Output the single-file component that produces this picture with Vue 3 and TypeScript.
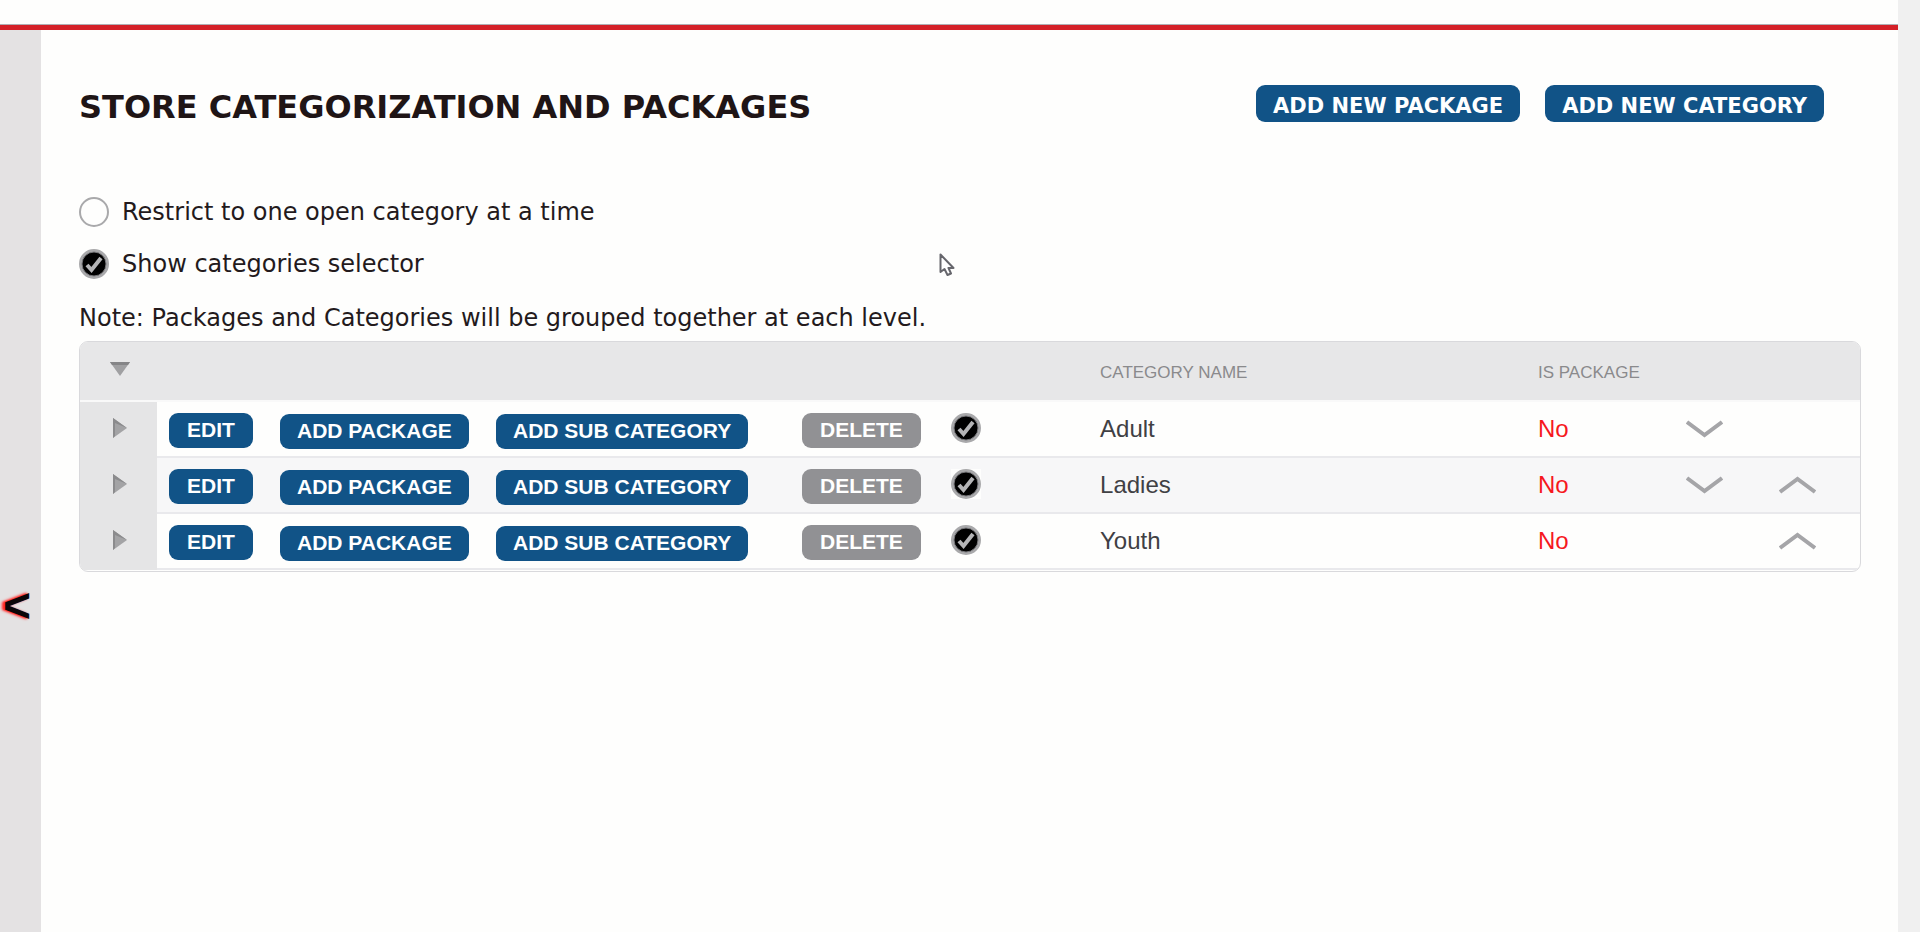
<script setup lang="ts">
import { ref } from 'vue'

interface Category {
  name: string
  isPackage: boolean
  selected: boolean
}

const restrictToOne = ref(false)
const showSelector = ref(true)

const categories = ref<Category[]>([
  { name: 'Adult', isPackage: false, selected: true },
  { name: 'Ladies', isPackage: false, selected: true },
  { name: 'Youth', isPackage: false, selected: true }
])

function move(index: number, step: number): void {
  const [item] = categories.value.splice(index, 1)
  categories.value.splice(index + step, 0, item)
}
</script>

<template>
  <div class="page">
    <div class="shell">
      <header class="topbar"></header>
      <div class="body">
        <aside class="sidebar">
          <button class="collapse" type="button" aria-label="Collapse menu">&lt;</button>
        </aside>
        <main class="content">
          <div class="heading">
            <h1>STORE CATEGORIZATION AND PACKAGES</h1>
            <div class="heading-actions">
              <button class="btn btn-top" type="button">ADD NEW PACKAGE</button>
              <button class="btn btn-top" type="button">ADD NEW CATEGORY</button>
            </div>
          </div>

          <div class="options">
            <label class="option">
              <span class="check">
                <input v-model="restrictToOne" type="checkbox" />
                <svg viewBox="0 0 30 30"><circle cx="15" cy="15" r="12" /><path d="M8 16l4.500 5L22 9" /></svg>
              </span>
              Restrict to one open category at a time
            </label>
            <label class="option">
              <span class="check">
                <input v-model="showSelector" type="checkbox" />
                <svg viewBox="0 0 30 30"><circle cx="15" cy="15" r="12" /><path d="M8 16l4.500 5L22 9" /></svg>
              </span>
              Show categories selector
            </label>
          </div>
          <p class="note">Note: Packages and Categories will be grouped together at each level.</p>

          <div class="grid">
            <table>
              <colgroup>
                <col class="c-toggle" />
                <col class="c-edit" />
                <col class="c-package" />
                <col class="c-sub" />
                <col class="c-delete" />
                <col class="c-check" />
                <col />
                <col class="c-is" />
                <col class="c-move" />
                <col class="c-move" />
              </colgroup>
              <thead>
                <tr>
                  <th class="toggle">
                    <button class="arrow" type="button" aria-label="Collapse all">
                      <svg width="20" height="16" viewBox="0 0 20 16"><path d="M0 1h20L10 15z" fill="#a0a0a2" /><path d="M0 1h20l-2 3H2z" fill="#858587" /></svg>
                    </button>
                  </th>
                  <th colspan="5"></th>
                  <th scope="col">CATEGORY NAME</th>
                  <th scope="col">IS PACKAGE</th>
                  <th colspan="2"></th>
                </tr>
              </thead>
              <tbody>
                <tr v-for="(category, i) in categories" :key="category.name">
                  <td class="toggle">
                    <button class="arrow" type="button" :aria-label="`Expand ${category.name}`">
                      <svg width="16" height="20" viewBox="0 0 16 20"><path d="M1 0v20l14-10z" fill="#a3a3a5" /><path d="M1 0v20l2-2V5l12 5z" fill="#8b8b8d" /></svg>
                    </button>
                  </td>
                  <td class="action"><button class="btn" type="button">EDIT</button></td>
                  <td class="action nested"><button class="btn" type="button">ADD PACKAGE</button></td>
                  <td class="action nested"><button class="btn" type="button">ADD SUB CATEGORY</button></td>
                  <td class="action"><button class="btn btn-delete" type="button">DELETE</button></td>
                  <td>
                    <span class="check">
                      <input v-model="category.selected" type="checkbox" :aria-label="`Select ${category.name}`" />
                      <svg viewBox="0 0 30 30"><circle cx="15" cy="15" r="12" /><path d="M8 16l4.500 5L22 9" /></svg>
                    </span>
                  </td>
                  <td class="text">{{ category.name }}</td>
                  <td class="text no">{{ category.isPackage ? 'Yes' : 'No' }}</td>
                  <td class="text">
                    <button v-if="i < categories.length - 1" class="arrow" type="button" aria-label="Move down" @click="move(i, 1)">
                      <svg class="chevron" width="37" height="18" viewBox="0 0 37 18"><path d="M1 2l17.500 13L36 2" /></svg>
                    </button>
                  </td>
                  <td class="text">
                    <button v-if="i > 0" class="arrow" type="button" aria-label="Move up" @click="move(i, -1)">
                      <svg class="chevron" width="37" height="18" viewBox="0 0 37 18"><path d="M1 16L18.500 3 36 16" /></svg>
                    </button>
                  </td>
                </tr>
              </tbody>
            </table>
          </div>
        </main>
      </div>
    </div>
    <div class="gutter"></div>
    <svg class="pointer" width="16" height="24" viewBox="0 0 16 24">
      <path d="M1.500 1.500v17.500l4-3 3 6 3.500-1.500-2.500-5.500h5z" />
    </svg>
  </div>
</template>

<style>
body {
  margin: 0;
  background: #fefefd;
}
</style>

<style scoped>
.page {
  position: relative;
  display: flex;
  min-height: 100vh;
  font-family: 'DejaVu Sans', Verdana, sans-serif;
  color: #231a1c;
}
.shell {
  flex: 1;
  display: flex;
  flex-direction: column;
  min-width: 0;
}
.gutter {
  width: 22px;
  background: #f0f0f0;
}
.topbar {
  height: 25px;
  border-bottom: 5px solid #d42027;
  box-shadow: inset 0 -1px #b0adb2;
}
.body {
  flex: 1;
  display: flex;
}
.sidebar {
  width: 41px;
  background: #e4e2e3;
  overflow: hidden;
  display: flex;
  justify-content: flex-end;
  align-items: flex-start;
  box-sizing: border-box;
  padding: 549px 10px 0 0;
}
.collapse {
  flex: none;
  border: 0;
  padding: 0;
  background: none;
  font: bold 48px/54px 'Liberation Sans', Arial, sans-serif;
  color: #0a0508;
  text-shadow: -2px 0 2px #ff2a2a, -3px 0 3px #ff4040;
}
.content {
  flex: 1;
  min-width: 0;
  padding: 55px 37px 0 38px;
}
.heading {
  display: flex;
  justify-content: space-between;
  align-items: flex-start;
  padding-right: 37px;
}
h1 {
  margin: 0;
  font-size: 32px;
  line-height: 44px;
  font-weight: bold;
  color: #1f1516;
}
.heading-actions {
  display: flex;
  gap: 25px;
}
.btn {
  display: block;
  box-sizing: border-box;
  height: 35px;
  border: 0;
  border-radius: 9px;
  padding: 0 18px;
  background: #115387;
  color: #fff;
  font: bold 21px/32px 'Liberation Sans', Arial, sans-serif;
  white-space: nowrap;
}
.btn-top {
  height: 37px;
  padding: 5px 17px 0;
  font-family: 'DejaVu Sans', Verdana, sans-serif;
}
.btn-delete {
  background: #919194;
}
.nested .btn {
  padding: 0 17px;
}
.options {
  display: flex;
  flex-direction: column;
  gap: 22px;
  margin-top: 68px;
}
.option {
  display: flex;
  align-items: center;
  gap: 13px;
  font-size: 24px;
  line-height: 30px;
}
.check {
  display: grid;
  width: 30px;
  height: 30px;
  background: #fefefd;
}
.check input,
.check svg {
  grid-area: 1 / 1;
  width: 30px;
  height: 30px;
  margin: 0;
}
.check input {
  appearance: none;
  box-sizing: border-box;
  border: 2px solid #a9a9ab;
  border-radius: 50%;
}
.check input:checked {
  border-width: 3px;
}
.check svg {
  display: none;
  pointer-events: none;
}
.check input:checked + svg {
  display: block;
}
.check circle {
  fill: #000;
  stroke: #77777a;
  stroke-width: 1;
}
.check path {
  fill: none;
  stroke: #b4b4b6;
  stroke-width: 4;
}
.note {
  margin: 24px 0 8px;
  font-size: 24px;
  line-height: 30px;
}
.grid {
  border: 1px solid #d9d9dc;
  border-radius: 9px;
  padding-bottom: 1px;
  overflow: hidden;
}
table {
  width: 100%;
  table-layout: fixed;
  border-collapse: separate;
  border-spacing: 0;
  font-family: 'Liberation Sans', Arial, sans-serif;
}
.c-toggle { width: 77px; }
.c-edit { width: 111px; }
.c-package { width: 216px; }
.c-sub { width: 306px; }
.c-delete { width: 149px; }
.c-check { width: 149px; }
.c-is { width: 148px; }
.c-move { width: 93px; }
th {
  box-sizing: border-box;
  height: 60px;
  padding: 4px 0 0 12px;
  border-bottom: 2px solid #f9f9f9;
  background: #e7e7e8;
  color: #8a8a8c;
  font-size: 17px;
  font-weight: normal;
  text-align: left;
  white-space: nowrap;
}
td {
  box-sizing: border-box;
  height: 56px;
  padding: 0 0 2px 12px;
  border-bottom: 2px solid #e9e9ec;
  vertical-align: middle;
}
tbody tr:nth-child(even) td {
  background: #f7f7f8;
}
td.action {
  padding-top: 4px;
}
td.nested {
  padding-top: 6px;
}
td.text {
  padding-top: 2px;
  font-size: 24px;
  line-height: 28px;
  color: #404044;
}
td.no {
  color: #f6181e;
}
tbody tr td.toggle {
  border-bottom-color: #e5e5e6;
  background: #e5e5e6;
}
td.toggle {
  padding-left: 32px;
}
th.toggle {
  padding: 0 0 4px 30px;
}
.arrow {
  display: block;
  border: 0;
  padding: 0;
  background: none;
}
.arrow svg {
  display: block;
}
.chevron path {
  fill: none;
  stroke: #a5a5a8;
  stroke-width: 4;
}
.pointer {
  position: absolute;
  left: 939px;
  top: 253px;
  pointer-events: none;
}
.pointer path {
  fill: #fff;
  stroke: #66666c;
  stroke-width: 2;
  stroke-linejoin: round;
}
</style>
